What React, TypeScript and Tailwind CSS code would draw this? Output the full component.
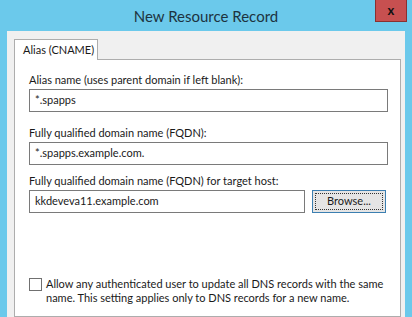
import React from 'react';

const font = { fontFamily: 'Lato, "Liberation Sans", sans-serif' };

const Field: React.FC<{ label: string; value: string; className?: string }> = ({ label, value, className }) => (
  <div className={className}>
    <div className="h-[15px] leading-[15px] text-[11px] text-[#1a1a1a] whitespace-nowrap">{label}</div>
    <div className="mt-[2px] h-[23px] border border-[#7a7a7a] bg-white pl-[5px] flex items-center text-[11px] text-[#1a1a1a]">
      {value}
    </div>
  </div>
);

const App: React.FC = () => {
  return (
    <div className="w-[412px] h-[317px] bg-[#6bc9eb] flex flex-col overflow-hidden" style={font}>
      {/* Title bar */}
      <div className="relative h-[31px] shrink-0 flex items-center justify-center">
        <span className="text-[15px] text-[#1d3340] mt-[2px]">New Resource Record</span>
        <div className="absolute top-0 right-[5px] w-[32px] h-[22px] bg-[#c75050] border border-[#8a3030] border-t-0 flex items-center justify-center">
          <span className="text-[13px] font-bold text-[#111] leading-none -mt-[1px]">x</span>
        </div>
      </div>

      {/* Dialog body */}
      <div className="flex-1 mx-[7px] bg-[#f0f0f0] pl-[7px] pr-[4px] pt-[8px] flex flex-col">
        <div className="relative z-10 -mb-px w-[84px] h-[21px] bg-white border border-b-0 border-[#adadad] pl-[8px] flex items-center text-[11px] text-[#1a1a1a] whitespace-nowrap">
          Alias (CNAME)
        </div>
        <div className="flex-1 bg-white border border-[#adadad] pl-[14px] pr-[12px] pt-[12px]">
          <Field label="Alias name (uses parent domain if left blank):" value="*.spapps" />
          <Field className="mt-[13px]" label="Fully qualified domain name (FQDN):" value="*.spapps.example.com." />
          <div className="mt-[8px]">
            <div className="h-[15px] leading-[15px] text-[11px] text-[#1a1a1a] whitespace-nowrap">Fully qualified domain name (FQDN) for target host:</div>
            <div className="mt-[2px] flex gap-[7px]">
              <div className="w-[276px] h-[23px] border border-[#7a7a7a] bg-white pl-[5px] flex items-center text-[11px] text-[#1a1a1a]">
                kkdeveva11.example.com
              </div>
              <div className="w-[74px] h-[23px] border border-[#3c7fb1] bg-[#e5e5e5] p-[2px]">
                <div className="w-full h-full border border-dotted border-[#333] flex items-center justify-center text-[11px] text-[#1a1a1a]">
                  Browse...
                </div>
              </div>
            </div>
          </div>
          <div className="mt-[64px] flex items-start gap-[4px]">
            <div className="w-[13px] h-[13px] border border-[#707070] bg-white shrink-0 mt-[1px]" />
            <div className="text-[11px] leading-[14px] text-[#1a1a1a] whitespace-nowrap">
              Allow any authenticated user to update all DNS records with the same
              <br />
              name. This setting applies only to DNS records for a new name.
            </div>
          </div>
        </div>
      </div>
    </div>
  );
};

export default App;
